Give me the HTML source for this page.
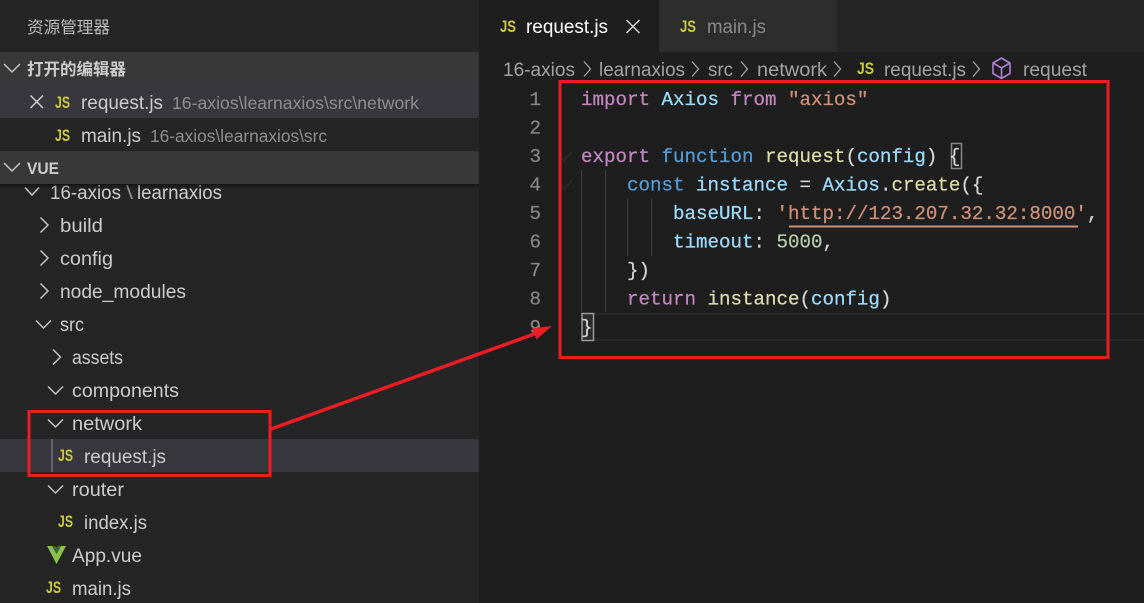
<!DOCTYPE html>
<html>
<head>
<meta charset="utf-8">
<title>request.js</title>
<style>
html,body{margin:0;padding:0;background:#1e1e1e;width:1144px;height:603px;overflow:hidden}
svg{display:block}
text{white-space:pre}
.s{font-family:"Liberation Sans","Noto Sans CJK SC",sans-serif;font-size:19px;fill:#cccccc}
.c{font-family:"Noto Sans CJK SC","Liberation Sans",sans-serif;font-size:16.6px}
.d{fill:#8f8f8f}
.b{fill:#a3a3a3}
.j{font-family:"Liberation Sans",sans-serif;font-weight:bold;font-size:16.5px;fill:#cbcb41}
.m{font-family:"Liberation Mono",monospace;font-size:19.17px;fill:#d4d4d4;stroke:#d4d4d4;stroke-width:.25}
.n{fill:#858585;stroke:#858585;text-anchor:end}
.k{fill:#c586c0;stroke:#c586c0}.v{fill:#9cdcfe;stroke:#9cdcfe}.f{fill:#569cd6;stroke:#569cd6}.y{fill:#dcdcaa;stroke:#dcdcaa}.r{fill:#ce9178;stroke:#ce9178}.u{fill:#b5cea8;stroke:#b5cea8}
.ch{fill:none;stroke:#c5c5c5;stroke-width:1.5}
</style>
</head>
<body>
<svg width="1144" height="603" viewBox="0 0 1144 603" xmlns="http://www.w3.org/2000/svg">
<defs>
<linearGradient id="sh" x1="0" y1="0" x2="0" y2="1"><stop offset="0" stop-color="#000" stop-opacity=".45"/><stop offset="1" stop-color="#000" stop-opacity="0"/></linearGradient>
</defs>

<!-- sidebar -->
<rect x="0" y="0" width="479" height="603" fill="#252526"/>
<text class="c" x="27" y="33" fill="#bbbbbb" textLength="83" lengthAdjust="spacingAndGlyphs">资源管理器</text>

<rect x="0" y="52" width="479" height="33" fill="#383838"/>
<path class="ch" d="M4 64l8 8 8-8"/>
<text class="c" x="27" y="75" fill="#cccccc" font-weight="bold" textLength="99" lengthAdjust="spacingAndGlyphs">打开的编辑器</text>

<rect x="0" y="85" width="479" height="33" fill="#37373d"/>
<path d="M30.500 95.500l12.500 12.500M43 95.500l-12.500 12.500" fill="none" stroke="#d0d0d0" stroke-width="1.500"/>
<text class="j" x="55" y="108" textLength="15" lengthAdjust="spacingAndGlyphs">JS</text>
<text class="s" x="81" y="109" textLength="82" lengthAdjust="spacingAndGlyphs">request.js</text>
<text class="s d" x="172" y="109" style="font-size:17.5px" textLength="247" lengthAdjust="spacingAndGlyphs">16-axios\learnaxios\src\network</text>

<text class="j" x="55" y="141" textLength="15" lengthAdjust="spacingAndGlyphs">JS</text>
<text class="s" x="81" y="142" textLength="60" lengthAdjust="spacingAndGlyphs">main.js</text>
<text class="s d" x="150" y="142" style="font-size:17.5px" textLength="177" lengthAdjust="spacingAndGlyphs">16-axios\learnaxios\src</text>

<!-- tree -->
<path class="ch" d="M25 187.500l7 7.500 7-7.500"/>
<text class="s" x="50" y="199" textLength="71" lengthAdjust="spacingAndGlyphs">16-axios</text>
<text class="s d" x="126" y="199" textLength="7" lengthAdjust="spacingAndGlyphs">\</text>
<text class="s" x="137" y="199" textLength="85" lengthAdjust="spacingAndGlyphs">learnaxios</text>

<path class="ch" d="M40.500 217.500l7.500 7.500-7.500 7.500"/>
<text class="s" x="60" y="232" textLength="43" lengthAdjust="spacingAndGlyphs">build</text>
<path class="ch" d="M40.500 250.500l7.500 7.500-7.500 7.500"/>
<text class="s" x="60" y="265" textLength="53" lengthAdjust="spacingAndGlyphs">config</text>
<path class="ch" d="M40.500 283.500l7.500 7.500-7.500 7.500"/>
<text class="s" x="60" y="298" textLength="126" lengthAdjust="spacingAndGlyphs">node_modules</text>
<path class="ch" d="M36 320.500l7.500 7.500 7.500-7.500"/>
<text class="s" x="60" y="331" textLength="24" lengthAdjust="spacingAndGlyphs">src</text>
<path class="ch" d="M53 349.500l7.500 7.500-7.500 7.500"/>
<text class="s" x="72" y="364" textLength="51" lengthAdjust="spacingAndGlyphs">assets</text>
<path class="ch" d="M48 386.500l7.500 7.500 7.500-7.500"/>
<text class="s" x="72" y="397" textLength="107" lengthAdjust="spacingAndGlyphs">components</text>
<path class="ch" d="M48 419.500l7.500 7.500 7.500-7.500"/>
<text class="s" x="72" y="430" textLength="70" lengthAdjust="spacingAndGlyphs">network</text>

<rect x="0" y="439" width="479" height="33" fill="#37373d"/>
<rect x="51" y="439" width="2" height="33" fill="#666666"/>
<text class="j" x="58" y="461" textLength="15" lengthAdjust="spacingAndGlyphs">JS</text>
<text class="s" x="84" y="463" textLength="82" lengthAdjust="spacingAndGlyphs">request.js</text>

<path class="ch" d="M48 485.500l7.500 7.500 7.500-7.500"/>
<text class="s" x="72" y="496" textLength="52" lengthAdjust="spacingAndGlyphs">router</text>
<text class="j" x="58" y="527" textLength="15" lengthAdjust="spacingAndGlyphs">JS</text>
<text class="s" x="84" y="529" textLength="63" lengthAdjust="spacingAndGlyphs">index.js</text>

<path d="M47 546h5l4.500 8 4.500-8h5l-9.500 18z" fill="#8dc149"/>
<path d="M52 546h3.500l1 2 1-2H61l-4.500 8z" fill="#3f6b28"/>
<text class="s" x="72" y="562" textLength="70" lengthAdjust="spacingAndGlyphs">App.vue</text>
<text class="j" x="46" y="593" textLength="15" lengthAdjust="spacingAndGlyphs">JS</text>
<text class="s" x="72" y="595" textLength="59" lengthAdjust="spacingAndGlyphs">main.js</text>

<rect x="0" y="184" width="479" height="5" fill="url(#sh)"/>
<rect x="0" y="151" width="479" height="33" fill="#383838"/>
<path class="ch" d="M4 163l8 8 8-8"/>
<text class="s" x="27" y="174" font-weight="bold" style="font-size:16.5px" textLength="32" lengthAdjust="spacingAndGlyphs">VUE</text>

<!-- tabs -->
<rect x="479" y="0" width="665" height="52" fill="#252526"/>
<rect x="479" y="0" width="180" height="52" fill="#1e1e1e"/>
<rect x="659" y="0" width="178" height="52" fill="#2d2d2d"/>
<text class="j" x="500" y="32" textLength="16" lengthAdjust="spacingAndGlyphs">JS</text>
<text class="s" x="526" y="33" style="fill:#ffffff" textLength="82" lengthAdjust="spacingAndGlyphs">request.js</text>
<path d="M626.500 20l13 13M639.500 20l-13 13" fill="none" stroke="#d4d4d4" stroke-width="1.500"/>
<text class="j" x="680" y="32" textLength="16" lengthAdjust="spacingAndGlyphs">JS</text>
<text class="s" x="707" y="33" style="fill:#8a8a8a" textLength="59" lengthAdjust="spacingAndGlyphs">main.js</text>

<!-- breadcrumb -->
<g>
<text class="s b" x="503" y="76" textLength="72" lengthAdjust="spacingAndGlyphs">16-axios</text>
<path d="M584 61.500l6.500 7.500-6.500 7.500" fill="none" stroke="#a3a3a3" stroke-width="1.300"/>
<text class="s b" x="599" y="76" textLength="86" lengthAdjust="spacingAndGlyphs">learnaxios</text>
<path d="M692 61.500l6.500 7.500-6.500 7.500" fill="none" stroke="#a3a3a3" stroke-width="1.300"/>
<text class="s b" x="708" y="76" textLength="25" lengthAdjust="spacingAndGlyphs">src</text>
<path d="M741 61.500l6.500 7.500-6.500 7.500" fill="none" stroke="#a3a3a3" stroke-width="1.300"/>
<text class="s b" x="757" y="76" textLength="70" lengthAdjust="spacingAndGlyphs">network</text>
<path d="M834 61.500l6.500 7.500-6.500 7.500" fill="none" stroke="#a3a3a3" stroke-width="1.300"/>
<text class="j" x="857" y="74" textLength="17" lengthAdjust="spacingAndGlyphs">JS</text>
<text class="s b" x="884" y="76" textLength="82" lengthAdjust="spacingAndGlyphs">request.js</text>
<path d="M973 61.500l6.500 7.500-6.500 7.500" fill="none" stroke="#a3a3a3" stroke-width="1.300"/>
<path d="M1001.500 58l8.500 5v10.500l-8.500 5-8.500-5V63zM993 63l8.500 5 8.500-5M1001.500 68v10.500" fill="none" stroke="#b180d7" stroke-width="1.600"/>
<text class="s b" x="1023" y="76" textLength="64" lengthAdjust="spacingAndGlyphs">request</text>
</g>

<!-- current line -->
<path d="M582 314h562M582 340h562" stroke="#282828" stroke-width="2" fill="none"/>

<!-- indent guides -->
<path d="M581.500 170v142M605.500 170v142M627.500 199v57M651.500 199v57" stroke="#404040" stroke-width="1" fill="none"/>

<!-- fold marks -->
<path d="M560 156l4 5 8-9M560 184.500l4 5 8-9" fill="none" stroke="#2c2c2c" stroke-width="1.500"/>

<!-- bracket boxes -->
<rect x="951.500" y="143.500" width="10" height="25" fill="none" stroke="#888888" stroke-width="1.500"/>
<rect x="582" y="313.500" width="11.500" height="27" fill="#2a2d2a" stroke="#9a9a9a" stroke-width="1.500"/>

<!-- line numbers -->
<text class="m n" x="541" y="105">1</text>
<text class="m n" x="541" y="133.500">2</text>
<text class="m n" x="541" y="162">3</text>
<text class="m n" x="541" y="190.500">4</text>
<text class="m n" x="541" y="219">5</text>
<text class="m n" x="541" y="247.500">6</text>
<text class="m n" x="541" y="276">7</text>
<text class="m n" x="541" y="304.500">8</text>
<text class="m n" x="541" y="333">9</text>

<!-- code -->
<text class="m" x="581" y="105"><tspan class="k">import</tspan> <tspan class="v">Axios</tspan> <tspan class="k">from</tspan> <tspan class="r">"axios"</tspan></text>
<text class="m" x="581" y="162"><tspan class="k">export</tspan> <tspan class="f">function</tspan> <tspan class="y">request</tspan>(<tspan class="v">config</tspan>) {</text>
<text class="m" x="627" y="190.500"><tspan class="f">const</tspan> <tspan class="v">instance</tspan> = <tspan class="v">Axios</tspan>.<tspan class="y">create</tspan>({</text>
<text class="m" x="673" y="219"><tspan class="v">baseURL</tspan>: <tspan class="r">'http://123.207.32.32:8000'</tspan>,</text>
<rect x="789" y="225.500" width="289" height="2" fill="#ce9178"/>
<text class="m" x="673" y="247.500"><tspan class="v">timeout</tspan>: <tspan class="u">5000</tspan>,</text>
<text class="m" x="627" y="276">})</text>
<text class="m" x="627" y="304.500"><tspan class="k">return</tspan> <tspan class="y">instance</tspan>(<tspan class="v">config</tspan>)</text>
<text class="m" x="581" y="333">}</text>

<!-- red annotations -->
<rect x="560" y="81.500" width="548" height="276" fill="none" stroke="#ed1c24" stroke-width="3"/>
<rect x="29" y="411.500" width="241" height="64" fill="none" stroke="#ed1c24" stroke-width="3"/>
<path d="M271 429L537 333" stroke="#ed1c24" stroke-width="3.500" fill="none"/>
<path d="M552 326L532 328.500 536.500 339.500z" fill="#ed1c24"/>
</svg>
</body>
</html>
